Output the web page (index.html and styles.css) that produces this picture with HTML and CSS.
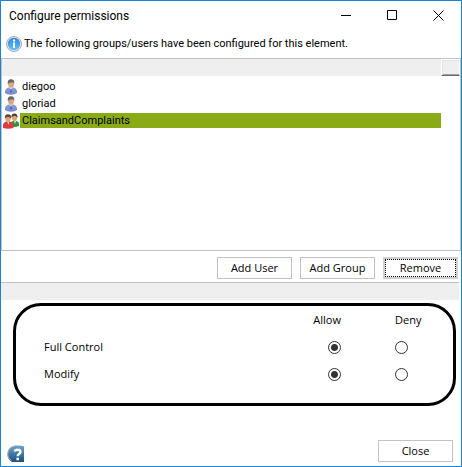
FILE: index.html
```html
<!DOCTYPE html>
<html lang="en">

<head>
    <meta charset="UTF-8">
    <meta name="viewport" content="width=device-width, initial-scale=1.0">
    <title>Configure permissions</title>
    <link rel="stylesheet" href="styles.css">
</head>

<body>
    <!-- Shared icon shapes -->
    <svg class="defs" width="0" height="0" aria-hidden="true">
        <defs>
            <linearGradient id="info-blue" x1="0" y1="0" x2="0" y2="1">
                <stop offset="0" stop-color="#2b85dd" />
                <stop offset="1" stop-color="#66c2fb" />
            </linearGradient>
            <linearGradient id="help-blue" x1="0" y1="0" x2="0" y2="1">
                <stop offset="0" stop-color="#6ca5cf" />
                <stop offset="1" stop-color="#1c4f7c" />
            </linearGradient>
            <linearGradient id="user-blue" x1="0" y1="0" x2="0" y2="1">
                <stop offset="0" stop-color="#8f9fd6" />
                <stop offset="1" stop-color="#7488cc" />
            </linearGradient>
            <symbol id="user" viewBox="0 0 14 16">
                <path d="M1 14Q.5 9.500 4.500 8.500H9.500Q13.500 9.500 13 14Q11 15.700 7 15.700T1 14Z" fill="url(#user-blue)" />
                <path d="M5.500 8.500L7 12L8.500 8.500Z" fill="#eef1fb" />
                <path d="M6.500 9.500H7.500L8 12.500L7 14L6 12.500Z" fill="#5366ad" />
                <ellipse cx="7" cy="5" rx="2.900" ry="3.800" fill="#dfa574" />
                <path d="M3.800 5Q3 .2 7 .2T10.200 5Q9.500 3.500 8.500 3.300Q5 3.500 3.800 5Z" fill="#66686c" />
            </symbol>
        </defs>
    </svg>

    <main class="window">
        <header class="titlebar">
            <h1>Configure permissions</h1>
            <button class="win-btn" aria-label="Minimize">
                <svg width="11" height="11"><path d="M0 5.500H10" /></svg>
            </button>
            <button class="win-btn" aria-label="Maximize">
                <svg width="11" height="11"><path d="M.5.5H9.500V9.500H.5Z" /></svg>
            </button>
            <button class="win-btn" aria-label="Close window">
                <svg width="11" height="11"><path d="M.5.5L10.500 10.500M10.500.5L.5 10.500" /></svg>
            </button>
        </header>

        <div class="info">
            <svg width="16" height="16" viewBox="0 0 16 16" aria-hidden="true">
                <circle cx="8" cy="8" r="7.500" fill="#e8e8e8" stroke="#a9adb2" />
                <circle cx="8" cy="8" r="6.200" fill="url(#info-blue)" />
                <circle cx="8" cy="4.500" r="1.200" fill="#fff" />
                <path d="M7 6.500H9V12H7Z" fill="#fff" />
            </svg>
            <p>The following groups/users have been configured for this element.</p>
        </div>

        <section class="list">
            <div class="list-head">
                <button class="corner" aria-label="Columns"></button>
            </div>
            <ul class="users">
                <li>
                    <svg width="14" height="16" aria-hidden="true"><use href="#user" /></svg>
                    <span>diegoo</span>
                </li>
                <li>
                    <svg width="14" height="16" aria-hidden="true"><use href="#user" /></svg>
                    <span>gloriad</span>
                </li>
                <li class="selected">
                    <svg width="16" height="16" viewBox="0 0 16 16" aria-hidden="true">
                        <path d="M7.500 13.500V10.500Q8 8 11.500 7.500Q16 8 16 11V13Q12 14.500 7.500 13.500Z" fill="#2f9440" />
                        <path d="M11 7.500L12 11L13 7.500Z" fill="#e8f6e6" />
                        <ellipse cx="11.500" cy="4.500" rx="2.500" ry="3.500" fill="#dda471" />
                        <path d="M8.400 4.500Q8.200 .5 11.500 .5T14.500 5Q13 2.800 11.500 2.800T8.400 4.500Z" fill="#4d4038" />
                        <path d="M0 15V12Q.5 9 3.500 8.500H6.500Q10.500 9 10.500 12V15Q5 16.500 0 15Z" fill="#dd3b40" />
                        <path d="M4.300 8.500L5.300 12L6.300 8.500Z" fill="#fdeeee" />
                        <ellipse cx="5" cy="5.500" rx="2.700" ry="3.500" fill="#dda471" />
                        <path d="M1.800 5.500Q1.500 1.200 5 1.200T8.200 5.500Q6.500 3.800 5 3.800T1.800 5.500Z" fill="#5d463b" />
                    </svg>
                    <span>ClaimsandComplaints</span>
                </li>
            </ul>
        </section>

        <div class="actions">
            <button class="btn">Add User</button>
            <button class="btn">Add Group</button>
            <button class="btn focused">Remove</button>
        </div>

        <div class="divider"></div>

        <section class="permissions">
            <table>
                <thead>
                    <tr>
                        <td></td>
                        <th class="allow" id="allow" scope="col">Allow</th>
                        <th class="deny" id="deny" scope="col">Deny</th>
                    </tr>
                </thead>
                <tbody>
                    <tr>
                        <th id="full" scope="row">Full Control</th>
                        <td class="allow"><input type="radio" name="full" aria-labelledby="full allow" checked></td>
                        <td class="deny"><input type="radio" name="full" aria-labelledby="full deny"></td>
                    </tr>
                    <tr>
                        <th id="modify" scope="row">Modify</th>
                        <td class="allow"><input type="radio" name="modify" aria-labelledby="modify allow" checked></td>
                        <td class="deny"><input type="radio" name="modify" aria-labelledby="modify deny"></td>
                    </tr>
                </tbody>
            </table>
        </section>

        <footer class="footer">
            <button class="help" aria-label="Help">
                <svg width="17" height="17" viewBox="0 0 17 17">
                    <path d="M17 1.500V17H5Q.5 14.500 .5 9.500Q.5 1 9.500 .5Q14 .3 17 1.500Z" fill="url(#help-blue)" />
                    <path d="M4.500 15.500Q.7 13 .7 9.500Q1 1.500 9 .7" fill="none" stroke="#a9b4bd" />
                    <path d="M7.800 6.500Q8 4.800 10.500 4.800Q13.500 4.800 13.500 7Q13.500 8.300 11.800 9.200Q10.700 9.800 10.700 11.200" fill="none" stroke="#fff" stroke-width="2.400" />
                    <path d="M9.400 12.700H12V15.200H9.400Z" fill="#fff" />
                </svg>
            </button>
            <button class="btn">Close</button>
        </footer>
    </main>
</body>

</html>
```
FILE: styles.css
```css
* {
    box-sizing: border-box;
}

body {
    margin: 0;
    font-family: "Open Sans", "Noto Sans", sans-serif;
    font-size: 11px;
    line-height: 16px;
    color: #000;
    background-color: #fff;
}

button {
    font: inherit;
    color: inherit;
    padding: 0;
    border: none;
    background: none;
}

svg {
    display: block;
    flex: none;
}

.defs {
    position: absolute;
}

.window {
    display: flex;
    flex-direction: column;
    min-height: 100vh;
    border: 1px solid #1883d7;
}

.titlebar,
.info,
.users {
    font-family: Roboto, "Open Sans", sans-serif;
}

/* Title bar */
.titlebar {
    display: flex;
    align-items: center;
    height: 29px;
    padding-left: 8px;
}

.titlebar h1 {
    flex: 1;
    margin: 0;
    font-size: 12px;
    font-weight: normal;
}

.win-btn {
    display: flex;
    align-items: center;
    justify-content: center;
    width: 46px;
    height: 29px;
}

.win-btn path {
    fill: none;
    stroke: #000;
}

.info {
    display: flex;
    align-items: center;
    gap: 2px;
    height: 28px;
    padding-left: 5px;
}

.info p {
    margin: 0;
}

/* Users and groups */
.list {
    flex: 1;
    border: 1px solid #c3c3c3;
}

.list-head {
    display: flex;
    justify-content: flex-end;
    height: 17px;
    background-color: #efefef;
}

.corner {
    width: 19px;
    border: 1px solid #fff;
    border-bottom-color: #696969;
    background-color: #efefef;
    box-shadow: inset 1px 1px #e3e3e3, inset 0 -1px #a0a0a0;
}

.users {
    list-style: none;
    margin: 2px 19px 0 0;
    padding: 0;
}

.users li {
    display: grid;
    grid-template-columns: 18px 1fr;
    align-items: center;
    justify-items: center;
    height: 17px;
}

.users span {
    justify-self: stretch;
    line-height: 15px;
    padding-left: 2px;
}

.users .selected span {
    background-color: #8aab16;
}

/* Buttons */
.actions {
    display: flex;
    justify-content: flex-end;
    gap: 8px;
    padding: 6px 3px 3px;
}

.btn {
    width: 75px;
    height: 22px;
    border: 1px solid #c3c3c3;
    background-color: #fff;
}

.btn.focused {
    border: 2px solid #d0d0d0;
    outline: 1px dotted #000;
    outline-offset: -3px;
}

.divider {
    height: 18px;
    margin-right: 2px;
    border-top: 1px solid #c3c3c3;
    background-color: #efefef;
}

/* Permissions */
.permissions {
    margin: 3px 5px 0 12px;
    padding: 0 0 16px 28px;
    border: 3px solid #000;
    border-radius: 28px;
}

.permissions table {
    width: 100%;
    border-collapse: collapse;
}

.permissions th,
.permissions td {
    height: 27px;
    padding: 0;
    font-weight: normal;
    text-align: left;
}

.permissions .allow {
    width: 54px;
    text-align: right;
}

.permissions .deny {
    width: 112px;
    padding-left: 54px;
}

.permissions input {
    appearance: none;
    display: inline-block;
    width: 13px;
    height: 13px;
    margin: 0;
    border: 1px solid #333;
    border-radius: 50%;
    vertical-align: middle;
}

.permissions input:checked {
    background: radial-gradient(circle, #333 3px, #fff 4px);
}

/* Footer */
.footer {
    display: flex;
    align-items: flex-end;
    justify-content: space-between;
    padding: 34px 8px 4px 6px;
}
```
